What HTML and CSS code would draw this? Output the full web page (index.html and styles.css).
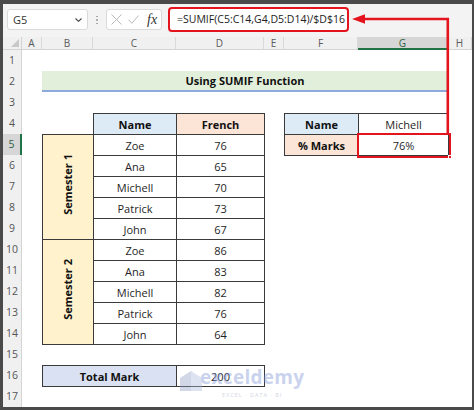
FILE: index.html
```html
<!DOCTYPE html>
<html lang="en">
<head>
<meta charset="utf-8">
<title>Using SUMIF Function</title>
<link rel="stylesheet" href="styles.css">
</head>
<body>
<div class="frame">
  <div class="fbar">
    <div class="namebox">
      <span class="nb-text">G5</span>
      <svg class="chev" width="7" height="4" viewBox="0 0 7 4"><polyline points="0.5,0.5 3.5,3.3 6.5,0.5" fill="none" stroke="#444" stroke-width="1.1"/></svg>
    </div>
    <div class="dots"><i></i><i></i><i></i></div>
    <div class="fxbox">
      <svg class="ico" width="11" height="11" viewBox="0 0 11 11"><path d="M0.5 0.5 L10.5 10.5 M10.5 0.5 L0.5 10.5" stroke="#b9b9b9" stroke-width="1" fill="none"/></svg>
      <svg class="ico" width="11" height="9" viewBox="0 0 11 9"><polyline points="0.5,4.6 3.8,8.3 10.5,0.5" stroke="#b9b9b9" stroke-width="1" fill="none"/></svg>
      <span class="fx">fx</span>
    </div>
    <div class="formula">=SUMIF(C5:C14,G4,D5:D14)/$D$16</div>
  </div>

  <div class="sheet">
    <div class="corner"><svg width="8" height="8" viewBox="0 0 8 8"><polygon points="8,0 8,8 0,8" fill="#c8c8c8"/></svg></div>
    <div class="ch">A</div>
    <div class="ch">B</div>
    <div class="ch">C</div>
    <div class="ch">D</div>
    <div class="ch">E</div>
    <div class="ch">F</div>
    <div class="ch sel">G</div>
    <div class="ch">H</div>

    <div class="rh">1</div>
    <div class="rh">2</div>
    <div class="rh">3</div>
    <div class="rh">4</div>
    <div class="rh sel">5</div>
    <div class="rh">6</div>
    <div class="rh">7</div>
    <div class="rh">8</div>
    <div class="rh">9</div>
    <div class="rh">10</div>
    <div class="rh">11</div>
    <div class="rh">12</div>
    <div class="rh">13</div>
    <div class="rh">14</div>
    <div class="rh">15</div>
    <div class="rh">16</div>
    <div class="rh">17</div>

    <div class="title">Using SUMIF Function</div>

    <table class="tbl main">
      <colgroup><col class="w-b"><col class="w-c"><col class="w-d"></colgroup>
      <tr><td class="blank"></td><td class="hd blue">Name</td><td class="hd peach">French</td></tr>
      <tr><td class="sem" rowspan="5"><span class="vert">Semester 1</span></td><td>Zoe</td><td>76</td></tr>
      <tr><td>Ana</td><td>65</td></tr>
      <tr><td>Michell</td><td>70</td></tr>
      <tr><td>Patrick</td><td>73</td></tr>
      <tr><td>John</td><td>67</td></tr>
      <tr><td class="sem" rowspan="5"><span class="vert">Semester 2</span></td><td>Zoe</td><td>86</td></tr>
      <tr><td>Ana</td><td>83</td></tr>
      <tr><td>Michell</td><td>82</td></tr>
      <tr><td>Patrick</td><td>76</td></tr>
      <tr><td>John</td><td>64</td></tr>
    </table>

    <table class="tbl lookup">
      <colgroup><col class="w-f"><col class="w-g"></colgroup>
      <tr><td class="hd blue">Name</td><td>Michell</td></tr>
      <tr><td class="hd peach">% Marks</td><td class="hl">76%<span class="handle"></span></td></tr>
    </table>

    <table class="tbl total">
      <colgroup><col class="w-bc"><col class="w-d"></colgroup>
      <tr><td class="hd slate">Total Mark</td><td>200</td></tr>
    </table>
  </div>

  <svg class="arrow" width="474" height="410" viewBox="0 0 474 410">
    <path d="M447.8 133 V19 H362" fill="none" stroke="#e3141d" stroke-width="2.6"/>
    <polygon points="352,19 365,14.2 365,23.8" fill="#e3141d"/>
  </svg>

  <div class="watermark">
    <svg class="wm-logo" width="22" height="20" viewBox="0 0 22 20">
      <polygon points="11,0 22,7 22,20 11,20" fill="#aebbe0"/>
      <polygon points="11,0 0,7 0,20 11,20" fill="#8e9cc4"/>
    </svg>
    <div class="wm-text">
      <span class="wm-name">exceldemy</span>
      <span class="wm-tag">EXCEL · DATA · BI</span>
    </div>
  </div>
</div>
</body>
</html>
```

FILE: styles.css
```css
* { box-sizing: border-box; }
html, body { margin: 0; padding: 0; }
body {
  width: 474px;
  height: 410px;
  overflow: hidden;
  background: #4a4a4a;
  font-family: "Open Sans", "Liberation Sans", sans-serif;
}
.frame {
  position: relative;
  width: 474px;
  height: 410px;
  padding: 4px 2px 3px 3px;
  background: #4a4a4a;
  display: flex;
  flex-direction: column;
}

/* formula bar */
.fbar {
  height: 33px;
  flex: none;
  background: #f3f3f3;
  display: flex;
  align-items: flex-start;
  padding-left: 4px;
}
.namebox {
  margin-top: 5px;
  width: 81px;
  height: 21px;
  background: #fff;
  border: 1px solid #dadada;
  border-radius: 3px;
  display: flex;
  align-items: center;
  justify-content: space-between;
  padding: 0 5px 0 5px;
}
.nb-text { font-size: 11px; color: #333; }
.chev { display: block; }
.dots {
  width: 18px;
  height: 33px;
  display: flex;
  flex-direction: column;
  align-items: center;
  justify-content: center;
  gap: 2px;
  padding-bottom: 1px;
}
.dots i { display: block; width: 1.6px; height: 1.6px; background: #9a9a9a; border-radius: 1px; }
.fxbox {
  margin-top: 5px;
  width: 56px;
  height: 21px;
  background: #fff;
  border: 1px solid #dadada;
  border-radius: 3px;
  display: flex;
  align-items: center;
  padding-left: 4px;
  gap: 6px;
}
.ico { display: block; }
.fx {
  font-family: "Liberation Serif", "DejaVu Serif", serif;
  font-style: italic;
  font-size: 14px;
  color: #333;
  margin-left: 2px;
  line-height: 1;
}
.formula {
  margin-top: 3px;
  margin-left: 6px;
  width: 181px;
  height: 25px;
  background: #fff;
  border: 2px solid #e3141d;
  border-radius: 4px;
  padding-left: 7px;
  font-size: 10.5px;
  line-height: 21px;
  color: #222;
  white-space: nowrap;
}

/* sheet */
.sheet {
  flex: 1;
  background: #fff;
  display: grid;
  grid-template-columns: 19px 20px 51px 83px 88px 20px 74px 90px 1fr;
  grid-template-rows: 13px repeat(17, 21px);
  font-size: 11px;
  color: #1f1f1f;
}
.corner {
  grid-row: 1;
  grid-column: 1;
  background: #f0f0f0;
  border-right: 1px solid #d4d4d4;
  border-bottom: 1px solid #d4d4d4;
  display: flex;
  align-items: flex-end;
  justify-content: flex-end;
  padding: 0 2px 2px 0;
}
.ch {
  grid-row: 1;
  background: #f0f0f0;
  border-right: 1px solid #d9d9d9;
  border-bottom: 1px solid #d4d4d4;
  font-size: 10px;
  color: #5a5a5a;
  text-align: center;
  line-height: 12px;
}
.ch.sel {
  background: #d6d6d6;
  border-bottom: 2px solid #217346;
  color: #2f5f3f;
}
.rh {
  grid-column: 1;
  background: #f0f0f0;
  border-right: 1px solid #d4d4d4;
  font-size: 10.5px;
  color: #555;
  text-align: center;
  line-height: 21px;
}
.rh.sel {
  background: #d6d6d6;
  border-right: 2px solid #217346;
  color: #2f5f3f;
}

.title {
  grid-column: 3 / 9;
  grid-row: 3;
  background: #e2efda;
  border-bottom: 2px solid #8ea9db;
  font-weight: 700;
  text-align: center;
  line-height: 19px;
  color: #111;
}

/* tables */
.tbl {
  border-collapse: collapse;
  table-layout: fixed;
  width: 100%;
  align-self: start;
}
.tbl td {
  height: 21px;
  padding: 0;
  border: 1px solid #3a3a3a;
  text-align: center;
  vertical-align: middle;
  line-height: 19px;
  white-space: nowrap;
}
.tbl td.blank { border: none; }
.main { grid-column: 3 / 6; grid-row: 5 / 16; }
.lookup { grid-column: 7 / 9; grid-row: 5 / 7; }
.total { grid-column: 3 / 6; grid-row: 17; }
.w-b { width: 51px; }
.w-c { width: 83px; }
.w-d { width: 88px; }
.w-f { width: 74px; }
.w-g { width: 90px; }
.w-bc { width: 134px; }
.hd { font-weight: 700; color: #111; }
.blue { background: #ddebf7; }
.peach { background: #fce4d6; }
.slate { background: #d9e1f2; }
.sem { background: #fff2cc; }
.vert {
  display: inline-block;
  writing-mode: vertical-rl;
  transform: rotate(180deg);
  font-weight: 700;
  color: #111;
  line-height: 14px;
}
.tbl td.hl {
  position: relative;
  outline: 2.5px solid #e3141d;
  outline-offset: 0;
}
.handle {
  position: absolute;
  right: -4px;
  bottom: -4px;
  width: 4px;
  height: 4px;
  background: #e3141d;
  border: 1px solid #fff;
}

/* overlays */
.arrow {
  position: absolute;
  left: 0;
  top: 0;
  pointer-events: none;
}
.watermark {
  position: absolute;
  left: 180px;
  top: 368px;
  display: flex;
  align-items: flex-start;
  opacity: 0.4;
  pointer-events: none;
}
.wm-logo { display: block; margin-top: 3px; }
.wm-text { display: flex; flex-direction: column; align-items: center; margin-left: -2px; }
.wm-name {
  font-family: "Open Sans", sans-serif;
  font-weight: 700;
  font-size: 19px;
  line-height: 19px;
  height: 19px;
  color: #7c92d6;
  letter-spacing: 0.3px;
}
.wm-tag {
  font-family: "Open Sans", sans-serif;
  font-size: 5.5px;
  line-height: 7px;
  color: #8a96b8;
  letter-spacing: 1px;
  margin-top: 5px;
}
```
